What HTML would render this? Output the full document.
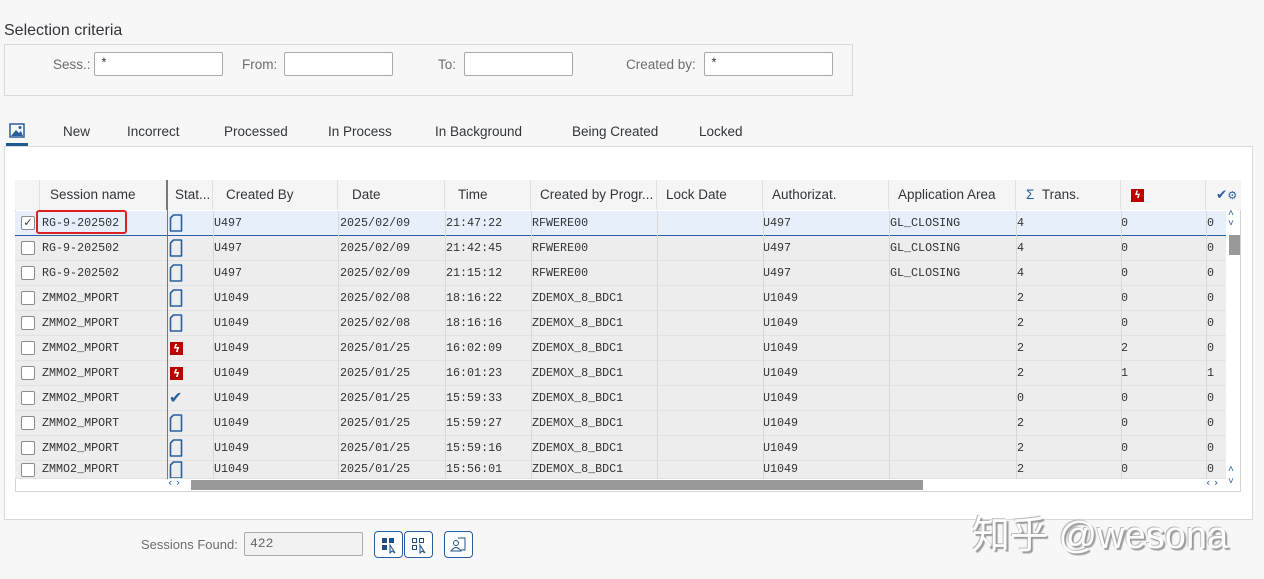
<!DOCTYPE html>
<html><head><meta charset="utf-8"><style>
*{box-sizing:border-box;margin:0;padding:0}
body{width:1264px;height:579px;background:#f7f7f7;font-family:"Liberation Sans",sans-serif;color:#32363a;position:relative;overflow:hidden}
.a{position:absolute}
.lbl{font-size:13.5px;color:#6a6d70}
.inp{position:absolute;height:24px;background:#fff;border:1px solid #a9a9a9;border-radius:2px;font-family:"Liberation Mono",monospace;font-size:13px;padding:3px 5px;color:#333}
.tab{position:absolute;top:124px;font-size:13.5px;color:#32363a}
.hd{position:absolute;top:180px;height:30px;font-size:13.5px;color:#32363a;line-height:30px;border-right:1px solid #e0e0e0;padding-left:10px;background:#f5f5f5;white-space:nowrap;overflow:hidden}
.row{position:absolute;left:15px;width:1211px;height:25px;background:#ededed;border-bottom:1px solid #e2e2e2;font-family:"Liberation Mono",monospace;font-size:11.7px;color:#333}
.row span{position:absolute;top:5px;white-space:nowrap}
.cb{position:absolute;left:6px;top:5px;width:14px;height:14px;border:1px solid #8c8c8c;background:#fff;border-radius:2px}
.doc{position:absolute;left:154px;top:3px}
.err{position:absolute;left:155px;top:6px;width:13px;height:13px;background:#bb0000;color:#fff;font-size:11px;line-height:13px;text-align:center;font-family:"DejaVu Sans",sans-serif;font-weight:bold}
.ok{position:absolute;left:154px;top:2px;color:#2a5f9e;font-size:16px;font-family:"DejaVu Sans",sans-serif}
.btn{position:absolute;top:531px;width:29px;height:27px;border:1px solid #2a5f9e;border-radius:4px;background:#fff}
</style></head><body>
<svg width="0" height="0" style="position:absolute"><defs><symbol id="d" viewBox="0 0 14 18"><path d="M4.5 1 H12.5 V17 H1.5 V4 Z" fill="none" stroke="#2a5f9e" stroke-width="1.6" stroke-linejoin="round"/></symbol></defs></svg>
<div class="a" style="left:4px;top:22px;font-size:16px;color:#32363a">Selection criteria</div>
<div class="a" style="left:4px;top:44px;width:849px;height:52px;border:1px solid #d9d9d9;background:#f7f7f7"></div>
<div class="a lbl" style="left:53px;top:57px">Sess.:</div><div class="inp" style="left:94px;top:52px;width:129px">*</div>
<div class="a lbl" style="left:242px;top:57px">From:</div><div class="inp" style="left:284px;top:52px;width:109px"></div>
<div class="a lbl" style="left:438px;top:57px">To:</div><div class="inp" style="left:464px;top:52px;width:109px"></div>
<div class="a lbl" style="left:626px;top:57px">Created by:</div><div class="inp" style="left:704px;top:52px;width:129px">*</div>

<svg class="a" style="left:9px;top:123px" width="16" height="15" viewBox="0 0 16 15"><rect x="1" y="1" width="14" height="13" fill="none" stroke="#2a5f9e" stroke-width="1.5"/><path d="M2 13 L7 7 L10 10 L12 8 L14 13Z" fill="#2a5f9e"/><circle cx="11" cy="4.5" r="1.5" fill="#2a5f9e"/></svg>
<div class="a" style="left:6px;top:143px;width:22px;height:3px;background:#1d5a8f"></div>
<div class="tab" style="left:63px">New</div>
<div class="tab" style="left:127px">Incorrect</div>
<div class="tab" style="left:224px">Processed</div>
<div class="tab" style="left:328px">In Process</div>
<div class="tab" style="left:435px">In Background</div>
<div class="tab" style="left:572px">Being Created</div>
<div class="tab" style="left:699px">Locked</div>

<div class="a" style="left:4px;top:146px;width:1249px;height:374px;background:#fff;border:1px solid #d9d9d9"></div>
<div class="a" style="left:15px;top:180px;width:1226px;height:312px;border:1px solid #d5d5d5;background:#fff"></div>

<div class="hd" style="left:15px;width:25px"></div>
<div class="hd" style="left:40px;width:127px;border-right:1px solid #777">Session name</div>
<div class="hd" style="left:167px;width:46px;padding-left:8px">Stat...</div>
<div class="hd" style="left:213px;width:125px;padding-left:13px">Created By</div>
<div class="hd" style="left:338px;width:107px;padding-left:14px">Date</div>
<div class="hd" style="left:445px;width:86px;padding-left:13px">Time</div>
<div class="hd" style="left:531px;width:126px;padding-left:9px">Created by Progr...</div>
<div class="hd" style="left:657px;width:106px;padding-left:9px">Lock Date</div>
<div class="hd" style="left:763px;width:126px;padding-left:9px">Authorizat.</div>
<div class="hd" style="left:889px;width:127px;padding-left:9px">Application Area</div>
<div class="hd" style="left:1016px;width:105px;padding-left:10px"><span style="color:#2a5f9e">Σ</span>&nbsp; Trans.</div>
<div class="hd" style="left:1121px;width:85px"><span style="display:inline-block;width:13px;height:13px;background:#bb0000;vertical-align:middle;color:#fff;font-size:10px;line-height:13px;text-align:center;font-weight:bold;font-family:'DejaVu Sans'">ϟ</span></div>
<div class="hd" style="left:1206px;width:35px;padding-left:10px;color:#2a5f9e;border-right:none">✔<span style="font-size:11px">⚙</span></div>

<div class="row" style="top:211px;background:#e7f0fa;border-bottom:1px solid #2a5f9e"><div class="cb" style="text-align:center;font-size:11px;line-height:12px;color:#333;font-family:'DejaVu Sans'">✓</div><span style="left:27px">RG-9-202502</span><svg class="doc" width="14" height="18"><use href="#d"/></svg><span style="left:199px">U497</span><span style="left:325px">2025/02/09</span><span style="left:431px">21:47:22</span><span style="left:517px">RFWERE00</span><span style="left:748px">U497</span><span style="left:875px">GL_CLOSING</span><span style="left:1002px">4</span><span style="left:1106px">0</span><span style="left:1192px">0</span></div>
<div class="a" style="left:36px;top:210px;width:91px;height:24px;border:2px solid #e02020;border-radius:3px"></div>

<div class="row" style="top:236px"><div class="cb"></div><span style="left:27px">RG-9-202502</span><svg class="doc" width="14" height="18"><use href="#d"/></svg><span style="left:199px">U497</span><span style="left:325px">2025/02/09</span><span style="left:431px">21:42:45</span><span style="left:517px">RFWERE00</span><span style="left:748px">U497</span><span style="left:875px">GL_CLOSING</span><span style="left:1002px">4</span><span style="left:1106px">0</span><span style="left:1192px">0</span></div>
<div class="row" style="top:261px"><div class="cb"></div><span style="left:27px">RG-9-202502</span><svg class="doc" width="14" height="18"><use href="#d"/></svg><span style="left:199px">U497</span><span style="left:325px">2025/02/09</span><span style="left:431px">21:15:12</span><span style="left:517px">RFWERE00</span><span style="left:748px">U497</span><span style="left:875px">GL_CLOSING</span><span style="left:1002px">4</span><span style="left:1106px">0</span><span style="left:1192px">0</span></div>
<div class="row" style="top:286px"><div class="cb"></div><span style="left:27px">ZMMO2_MPORT</span><svg class="doc" width="14" height="18"><use href="#d"/></svg><span style="left:199px">U1049</span><span style="left:325px">2025/02/08</span><span style="left:431px">18:16:22</span><span style="left:517px">ZDEMOX_8_BDC1</span><span style="left:748px">U1049</span><span style="left:1002px">2</span><span style="left:1106px">0</span><span style="left:1192px">0</span></div>
<div class="row" style="top:311px"><div class="cb"></div><span style="left:27px">ZMMO2_MPORT</span><svg class="doc" width="14" height="18"><use href="#d"/></svg><span style="left:199px">U1049</span><span style="left:325px">2025/02/08</span><span style="left:431px">18:16:16</span><span style="left:517px">ZDEMOX_8_BDC1</span><span style="left:748px">U1049</span><span style="left:1002px">2</span><span style="left:1106px">0</span><span style="left:1192px">0</span></div>
<div class="row" style="top:336px"><div class="cb"></div><span style="left:27px">ZMMO2_MPORT</span><div class="err">ϟ</div><span style="left:199px">U1049</span><span style="left:325px">2025/01/25</span><span style="left:431px">16:02:09</span><span style="left:517px">ZDEMOX_8_BDC1</span><span style="left:748px">U1049</span><span style="left:1002px">2</span><span style="left:1106px">2</span><span style="left:1192px">0</span></div>
<div class="row" style="top:361px"><div class="cb"></div><span style="left:27px">ZMMO2_MPORT</span><div class="err">ϟ</div><span style="left:199px">U1049</span><span style="left:325px">2025/01/25</span><span style="left:431px">16:01:23</span><span style="left:517px">ZDEMOX_8_BDC1</span><span style="left:748px">U1049</span><span style="left:1002px">2</span><span style="left:1106px">1</span><span style="left:1192px">1</span></div>
<div class="row" style="top:386px"><div class="cb"></div><span style="left:27px">ZMMO2_MPORT</span><div class="ok">✔</div><span style="left:199px">U1049</span><span style="left:325px">2025/01/25</span><span style="left:431px">15:59:33</span><span style="left:517px">ZDEMOX_8_BDC1</span><span style="left:748px">U1049</span><span style="left:1002px">0</span><span style="left:1106px">0</span><span style="left:1192px">0</span></div>
<div class="row" style="top:411px"><div class="cb"></div><span style="left:27px">ZMMO2_MPORT</span><svg class="doc" width="14" height="18"><use href="#d"/></svg><span style="left:199px">U1049</span><span style="left:325px">2025/01/25</span><span style="left:431px">15:59:27</span><span style="left:517px">ZDEMOX_8_BDC1</span><span style="left:748px">U1049</span><span style="left:1002px">2</span><span style="left:1106px">0</span><span style="left:1192px">0</span></div>
<div class="row" style="top:436px"><div class="cb"></div><span style="left:27px">ZMMO2_MPORT</span><svg class="doc" width="14" height="18"><use href="#d"/></svg><span style="left:199px">U1049</span><span style="left:325px">2025/01/25</span><span style="left:431px">15:59:16</span><span style="left:517px">ZDEMOX_8_BDC1</span><span style="left:748px">U1049</span><span style="left:1002px">2</span><span style="left:1106px">0</span><span style="left:1192px">0</span></div>
<div class="row" style="top:461px;height:18px;overflow:hidden"><div class="cb" style="top:2px"></div><span style="left:27px;top:1px">ZMMO2_MPORT</span><svg class="doc" width="14" height="18" style="top:0"><use href="#d"/></svg><span style="left:199px;top:1px">U1049</span><span style="left:325px;top:1px">2025/01/25</span><span style="left:431px;top:1px">15:56:01</span><span style="left:517px;top:1px">ZDEMOX_8_BDC1</span><span style="left:748px;top:1px">U1049</span><span style="left:1002px;top:1px">2</span><span style="left:1106px;top:1px">0</span><span style="left:1192px;top:1px">0</span></div>

<div class="a" style="left:167px;top:180px;width:1px;height:299px;background:#777"></div>
<div class="a" style="left:213px;top:211px;width:1px;height:268px;background:#d8d8d8"></div>
<div class="a" style="left:338px;top:211px;width:1px;height:268px;background:#d8d8d8"></div>
<div class="a" style="left:445px;top:211px;width:1px;height:268px;background:#d8d8d8"></div>
<div class="a" style="left:531px;top:211px;width:1px;height:268px;background:#d8d8d8"></div>
<div class="a" style="left:657px;top:211px;width:1px;height:268px;background:#d8d8d8"></div>
<div class="a" style="left:763px;top:211px;width:1px;height:268px;background:#d8d8d8"></div>
<div class="a" style="left:889px;top:211px;width:1px;height:268px;background:#d8d8d8"></div>
<div class="a" style="left:1016px;top:211px;width:1px;height:268px;background:#d8d8d8"></div>
<div class="a" style="left:1121px;top:211px;width:1px;height:268px;background:#d8d8d8"></div>
<div class="a" style="left:1206px;top:211px;width:1px;height:268px;background:#d8d8d8"></div>

<div class="a" style="left:1226px;top:211px;width:14px;height:268px;background:#fff"></div>
<div class="a" style="left:1228px;top:208px;font-size:10px;color:#2a5f9e">˄</div>
<div class="a" style="left:1228px;top:218px;font-size:10px;color:#2a5f9e">˅</div>
<div class="a" style="left:1229px;top:235px;width:11px;height:20px;background:#999"></div>
<div class="a" style="left:1228px;top:464px;font-size:10px;color:#2a5f9e">˄</div>
<div class="a" style="left:1228px;top:476px;font-size:10px;color:#2a5f9e">˅</div>
<div class="a" style="left:16px;top:479px;width:1210px;height:12px;background:#fff"></div>
<div class="a" style="left:168px;top:476px;font-size:11px;color:#2a5f9e;font-family:'DejaVu Sans'">‹ ›</div>
<div class="a" style="left:191px;top:480px;width:732px;height:10px;background:#999"></div>
<div class="a" style="left:1206px;top:476px;font-size:11px;color:#2a5f9e;font-family:'DejaVu Sans'">‹ ›</div>

<div class="a lbl" style="left:141px;top:537px;font-size:13px">Sessions Found:</div>
<div class="inp" style="left:244px;top:532px;width:119px;background:#f2f2f2;color:#666;border-color:#aaa">422</div>
<div class="btn" style="left:374px"><svg width="27" height="25"><rect x="7" y="6" width="5" height="5" fill="#1d4f85"/><rect x="14" y="6" width="5" height="5" fill="#1d4f85"/><rect x="7" y="13" width="5" height="5" fill="#1d4f85"/><path d="M15 13 L15 21 L17 19 L20 21 Z" fill="none" stroke="#1d4f85"/></svg></div>
<div class="btn" style="left:404px"><svg width="27" height="25"><rect x="7.5" y="6.5" width="4" height="4" fill="none" stroke="#1d4f85"/><rect x="14.5" y="6.5" width="4" height="4" fill="none" stroke="#1d4f85"/><rect x="7.5" y="13.5" width="4" height="4" fill="none" stroke="#1d4f85"/><path d="M15 13 L15 21 L17 19 L20 21 Z" fill="none" stroke="#1d4f85"/></svg></div>
<div class="btn" style="left:444px"><svg width="27" height="25"><circle cx="11" cy="11" r="2.5" fill="none" stroke="#1d4f85"/><path d="M6 19 Q11 12 16 19 Z M13 6 H20 V18 H16" fill="none" stroke="#1d4f85"/></svg></div>

<div class="a" style="left:972px;top:504px;font-size:38px;color:#fdfdfd;font-family:'Liberation Sans','Noto Sans CJK SC',sans-serif;text-shadow:2px 2px 1px #9a9a9a,-1px -1px 0 #bbb">知乎 @wesona</div>
</body></html>
